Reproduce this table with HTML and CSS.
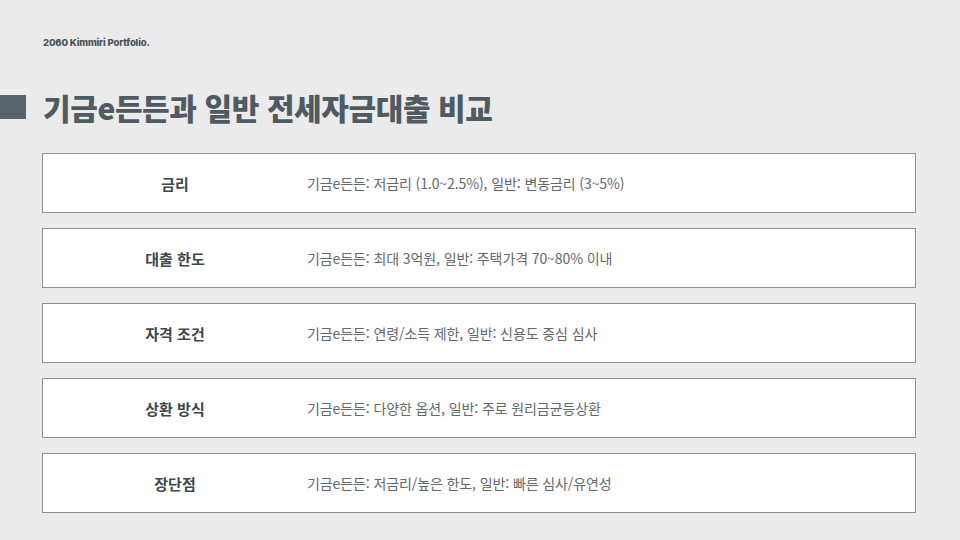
FILE: index.html
```html
<!DOCTYPE html>
<html lang="ko">
<head>
<meta charset="utf-8">
<link rel="stylesheet" href="styles.css">
</head>
<body>
<div class="slide">
  <div class="brand">2060 Kimmiri Portfolio.</div>
  <div class="title-row">
    <span class="marker"></span>
    <h1 class="title">기금e든든과 일반 전세자금대출 비교</h1>
  </div>
  <div class="rows">
    <div class="row"><div class="label">금리</div><div class="value">기금e든든: 저금리 (1.0~2.5%), 일반: 변동금리 (3~5%)</div></div>
    <div class="row"><div class="label">대출 한도</div><div class="value">기금e든든: 최대 3억원, 일반: 주택가격 70~80% 이내</div></div>
    <div class="row"><div class="label">자격 조건</div><div class="value">기금e든든: 연령/소득 제한, 일반: 신용도 중심 심사</div></div>
    <div class="row"><div class="label">상환 방식</div><div class="value">기금e든든: 다양한 옵션, 일반: 주로 원리금균등상환</div></div>
    <div class="row"><div class="label">장단점</div><div class="value">기금e든든: 저금리/높은 한도, 일반: 빠른 심사/유연성</div></div>
  </div>
</div>
</body>
</html>
```
FILE: styles.css
```css
html, body {
  margin: 0;
  padding: 0;
}
body {
  background: #ebebeb;
  font-family: "Noto Sans CJK KR", "Noto Sans", sans-serif;
}
.slide {
  width: 960px;
  height: 540px;
  box-sizing: border-box;
  padding-top: 36px;
  overflow: hidden;
}
.brand {
  margin-left: 43px;
  font-family: Inter, "Noto Sans", sans-serif;
  font-weight: 800;
  font-size: 9.5px;
  line-height: 14px;
  color: #46535a;
  letter-spacing: -0.15px;
}
.title-row {
  display: flex;
  align-items: center;
  gap: 17px;
  margin-top: 37px;
  height: 40px;
}
.marker {
  width: 26px;
  height: 24px;
  background: #58656b;
  flex: none;
}
.title {
  margin: 0;
  font-size: 30px;
  font-weight: 900;
  color: #4f5b62;
  letter-spacing: -0.4px;
  line-height: 40px;
}
.rows {
  margin: 26px 0 0 42px;
  width: 874px;
  display: flex;
  flex-direction: column;
  gap: 15px;
}
.row {
  height: 60px;
  box-sizing: border-box;
  background: #ffffff;
  border: 1px solid #8c8f90;
  display: flex;
  align-items: center;
}
.label {
  width: 264px;
  text-align: center;
  font-size: 15px;
  font-weight: 700;
  color: #3e474c;
}
.value {
  font-size: 14px;
  color: #63686b;
  letter-spacing: -0.1px;
}
```
